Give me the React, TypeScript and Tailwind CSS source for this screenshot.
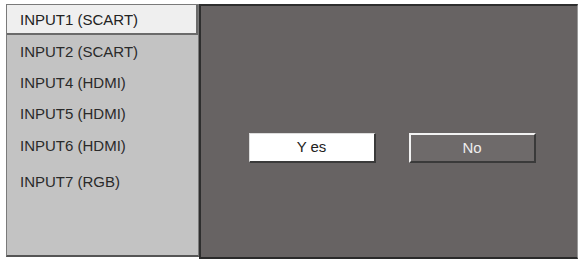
import React from 'react'

const inputs = [
  { name: 'INPUT1 (SCART)', h: 'h-[30px]' },
  { name: 'INPUT2 (SCART)', h: 'h-[31px] mt-[2px]' },
  { name: 'INPUT4 (HDMI)', h: 'h-[31px]' },
  { name: 'INPUT5 (HDMI)', h: 'h-[31px]' },
  { name: 'INPUT6 (HDMI)', h: 'h-[33px]' },
  { name: 'INPUT7 (RGB)', h: 'h-[38px]' },
]

export default function App() {
  return (
    <div
      className="w-[582px] h-[262px] bg-white pt-[4px] pl-[6px]"
      style={{ fontFamily: '"Liberation Sans", Arial, sans-serif' }}
    >
      <div className="flex w-[572px] h-[255px]">
        {/* Source list */}
        <div className="w-[193px] h-[253px] bg-[#c3c3c3] border border-[#7a7a7a] border-b-2 border-b-[#555] flex flex-col">
          {inputs.map((item, i) => (
            <div
              key={item.name}
              className={
                i === 0
                  ? `${item.h} flex items-center pl-[13px] pt-[2px] bg-[#efefef] border-b-2 border-r-2 border-[#6a6a6a] text-[15px] text-[#222]`
                  : `${item.h} flex items-center pl-[13px] text-[15px] text-[#2a2a2a]`
              }
            >
              {item.name}
            </div>
          ))}
        </div>

        {/* Confirm area */}
        <div className="flex-1 h-[255px] bg-[#676363] border-t-2 border-l-2 border-[#2e2e2e] border-b-2 border-b-[#2a2a2a] border-r border-r-[#9a9a9a] flex justify-center gap-[33px] pt-[127px] pl-[6px]">
          <button className="w-[127px] h-[30px] bg-white border-t border-l border-[#ddd] border-r-2 border-b-2 border-r-[#3a3a3a] border-b-[#3a3a3a] text-[15px] text-[#222]">
            Y es
          </button>
          <button className="w-[127px] h-[30px] bg-[#6e6a6a] border-t-2 border-l-2 border-[#f2f2f2] border-r-2 border-b-2 border-r-[#3a3a3a] border-b-[#3a3a3a] text-[15px] text-[#eee]">
            No
          </button>
        </div>
      </div>
    </div>
  )
}
